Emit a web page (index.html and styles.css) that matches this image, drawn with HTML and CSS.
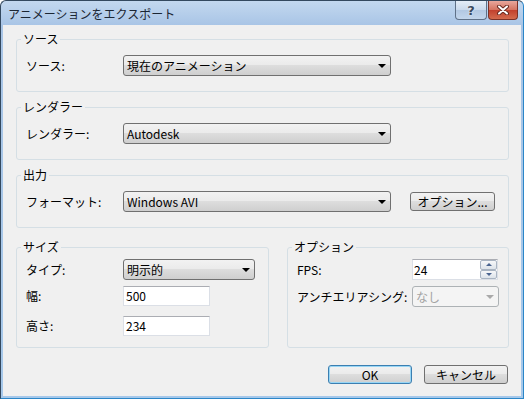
FILE: index.html
```html
<!DOCTYPE html>
<html lang="ja">
<head>
    <meta charset="UTF-8">
    <title>アニメーションをエクスポート</title>
    <link rel="stylesheet" href="styles.css">
</head>
<body>

<div class="window">
    <div class="titlebar">
        <span class="title">アニメーションをエクスポート</span>
        <div class="caption-buttons">
            <span class="cap-btn help">?</span>
            <span class="cap-btn close">
                <svg width="14" height="10" viewBox="0 0 14 10">
                    <path d="M3 1.5 L11 8.5 M11 1.5 L3 8.5" stroke="#6a2a20" stroke-width="4" stroke-linecap="round"/>
                    <path d="M3 1.5 L11 8.5 M11 1.5 L3 8.5" stroke="#fff" stroke-width="2" stroke-linecap="round"/>
                </svg>
            </span>
        </div>
    </div>

    <div class="client">
        <fieldset class="group">
            <legend>ソース</legend>
            <div class="row">
                <span class="lbl">ソース:</span>
                <div class="combo combo-wide">現在のアニメーション<span class="arrow"></span></div>
            </div>
        </fieldset>

        <fieldset class="group">
            <legend>レンダラー</legend>
            <div class="row">
                <span class="lbl">レンダラー:</span>
                <div class="combo combo-wide">Autodesk<span class="arrow"></span></div>
            </div>
        </fieldset>

        <fieldset class="group">
            <legend>出力</legend>
            <div class="row">
                <span class="lbl">フォーマット:</span>
                <div class="combo combo-wide">Windows AVI<span class="arrow"></span></div>
                <button class="btn btn-options">オプション...</button>
            </div>
        </fieldset>

        <div class="pair">
            <fieldset class="group group-size">
                <legend>サイズ</legend>
                <div class="row">
                    <span class="lbl">タイプ:</span>
                    <div class="combo combo-type">明示的<span class="arrow"></span></div>
                </div>
                <div class="row row-gap">
                    <span class="lbl">幅:</span>
                    <div class="field">500</div>
                </div>
                <div class="row row-gap-lg">
                    <span class="lbl">高さ:</span>
                    <div class="field">234</div>
                </div>
            </fieldset>

            <fieldset class="group group-options">
                <legend>オプション</legend>
                <div class="row">
                    <span class="lbl lbl-opt">FPS:</span>
                    <div class="spin">
                        <div class="spin-field">24</div>
                        <div class="spin-btns">
                            <span class="spin-btn"><span class="tri up"></span></span>
                            <span class="spin-btn"><span class="tri down"></span></span>
                        </div>
                    </div>
                </div>
                <div class="row row-gap">
                    <span class="lbl lbl-opt">アンチエリアシング:</span>
                    <div class="combo combo-aa disabled">なし<span class="arrow"></span></div>
                </div>
            </fieldset>
        </div>

        <div class="actions">
            <button class="btn btn-default">OK</button>
            <button class="btn">キャンセル</button>
        </div>
    </div>
</div>

</body>
</html>
```

FILE: styles.css
```css
* {
    box-sizing: border-box;
}
body {
    margin: 0;
    font-family: "Noto Sans CJK JP", "Liberation Sans", sans-serif;
    font-size: 12px;
    color: #000;
}
.window {
    width: 524px;
    height: 399px;
    display: flex;
    flex-direction: column;
    padding: 0 2px 2px;
    border: 1px solid #34495f;
    border-right-color: #2b86c8;
    border-bottom-color: #2b86c8;
    border-radius: 6px 6px 0 0;
    background: linear-gradient(#c3d8ef, #a9c5e6 24px, #a6c8ea);
}
.titlebar {
    height: 24px;
    display: flex;
    justify-content: space-between;
    align-items: flex-start;
    padding: 0 3px 0 5px;
}
.title {
    line-height: 25px;
    color: #1b2633;
}
.caption-buttons {
    display: flex;
    gap: 1px;
}
.cap-btn {
    height: 19px;
    display: flex;
    align-items: center;
    justify-content: center;
    border: 1px solid #5f7188;
    border-top: none;
    border-radius: 0 0 4px 4px;
}
.help {
    width: 32px;
    background: linear-gradient(#e4edf7, #c9d9ec 50%, #b2c8e2 51%, #c3d6ec);
    color: #3a4a5e;
    font-family: "DejaVu Sans", sans-serif;
    font-weight: bold;
    font-size: 13px;
    text-shadow: 0 0 2px #fff;
}
.close {
    width: 30px;
    border-color: #7a3128;
    background: linear-gradient(#e8a79c, #d4725f 50%, #c2402d 51%, #d36b4e);
}
.client {
    flex: 1;
    background: #f0f0f0;
    padding: 7px 12px 0 13px;
}
.group {
    margin: 0;
    padding: 9px 0 15px 0;
    border: 1px solid #d5dfe5;
    border-radius: 3px;
    min-width: 0;
}
.client > .group + .group {
    margin-top: 8px;
}
.group legend {
    margin-left: 4px;
    padding: 0 2px;
    line-height: 14px;
}
.row {
    display: flex;
    align-items: center;
    padding-left: 9px;
}
.row-gap {
    margin-top: 6px;
}
.row-gap-lg {
    margin-top: 10px;
}
.lbl {
    width: 97px;
    flex-shrink: 0;
    line-height: 14px;
    white-space: nowrap;
}
.lbl-opt {
    width: 115px;
}
.combo {
    position: relative;
    flex-shrink: 0;
    height: 21px;
    line-height: 19px;
    padding-left: 3px;
    border: 1px solid #707070;
    border-radius: 3px;
    background: linear-gradient(#f2f2f2, #ebebeb 45%, #dddddd 50%, #cfcfcf);
}
.combo .arrow {
    position: absolute;
    right: 4px;
    top: 8px;
    border-left: 4px solid transparent;
    border-right: 4px solid transparent;
    border-top: 4px solid #000;
}
.combo-wide {
    width: 268px;
}
.combo-type {
    width: 132px;
}
.combo-aa {
    width: 87px;
}
.combo.disabled {
    color: #a3a3a3;
    border-color: #adb2b5;
    background: #f4f4f4;
}
.combo.disabled .arrow {
    border-top-color: #a9a9a9;
}
.field {
    width: 87px;
    height: 20px;
    line-height: 18px;
    padding-left: 2px;
    background: #fff;
    border: 1px solid #dbdfe6;
    border-top-color: #abadb3;
}
.spin {
    width: 86px;
    height: 21px;
    flex-shrink: 0;
    display: flex;
    background: #fff;
    border: 1px solid #dbdfe6;
    border-top-color: #abadb3;
}
.spin-field {
    flex: 1;
    line-height: 19px;
    padding-left: 1px;
}
.spin-btns {
    width: 17px;
    display: flex;
    flex-direction: column;
}
.spin-btn {
    flex: 1;
    display: flex;
    align-items: center;
    justify-content: center;
    border: 1px solid #a9b4c2;
    border-radius: 2px;
    background: linear-gradient(#f6f7f9, #dde3ea);
}
.tri {
    border-left: 3px solid transparent;
    border-right: 3px solid transparent;
}
.tri.up {
    border-bottom: 3px solid #4a6490;
}
.tri.down {
    border-top: 3px solid #4a6490;
}
.btn {
    width: 84px;
    height: 19px;
    padding: 0;
    font-family: inherit;
    font-size: 12px;
    line-height: 17px;
    color: #000;
    border: 1px solid #707070;
    border-radius: 3px;
    background: linear-gradient(#f2f2f2, #ebebeb 45%, #dddddd 50%, #cfcfcf);
}
.btn-options {
    width: 85px;
    margin-left: 19px;
}
.btn-default {
    border-color: #3c7fb1;
    box-shadow: inset 0 0 0 1px #98d6f5;
}
.pair {
    display: flex;
    gap: 18px;
    margin-top: 12px;
}
.pair .group {
    height: 108px;
    padding: 5px 0 11px 0;
}
.group-size {
    width: 253px;
}
.group-options {
    flex: 1;
}
.actions {
    display: flex;
    justify-content: flex-end;
    gap: 12px;
    margin-top: 17px;
    padding-right: 1px;
}
```
